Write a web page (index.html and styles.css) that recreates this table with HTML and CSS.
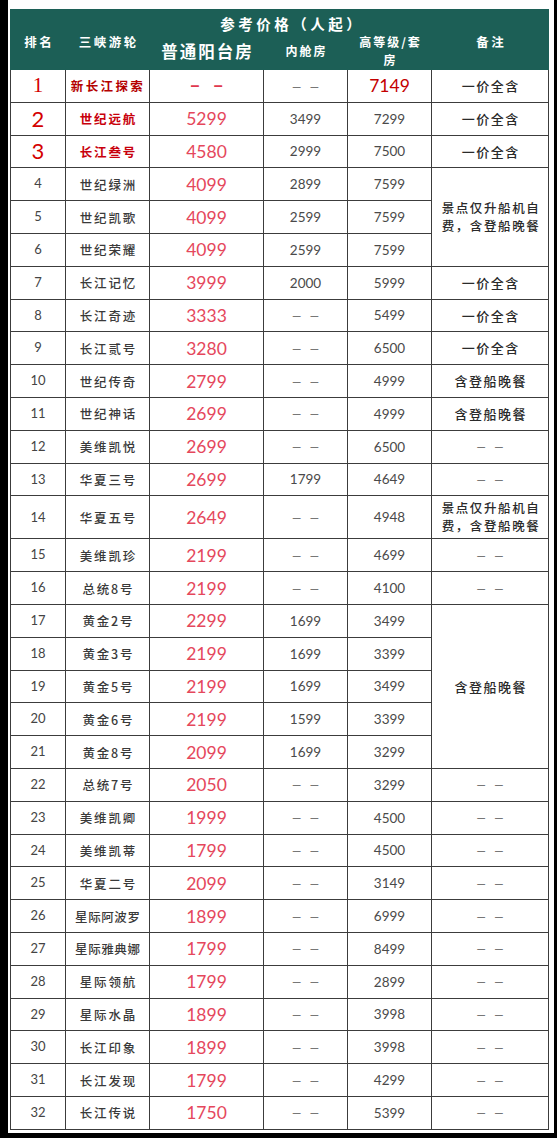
FILE: index.html
```html
<!DOCTYPE html>
<html lang="zh">
<head>
<meta charset="utf-8">
<title>三峡游轮参考价格</title>
<link rel="stylesheet" href="styles.css">
</head>
<body>
<div class="panel">
<table class="price">
<colgroup>
<col class="c1"><col class="c2"><col class="c3"><col class="c4"><col class="c5"><col class="c6">
</colgroup>
<thead>
<tr class="ha">
<th rowspan="2" class="hs">排名</th>
<th rowspan="2" class="hs">三峡游轮</th>
<th colspan="3" class="htitle">参考价格（人起）</th>
<th rowspan="2" class="hs">备注</th>
</tr>
<tr class="hb">
<th class="hbig">普通阳台房</th>
<th class="hsm">内舱房</th>
<th class="hsm hwrap">高等级/套房</th>
</tr>
</thead>
<tbody>
<tr><td class="rk rk1">1</td><td class="nm nm1">新长江探索</td><td class="dash dred">– –</td><td class="dash">– –</td><td class="p5red">7149</td><td class="rm">一价全含</td></tr>
<tr><td class="rk rktop">2</td><td class="nm nmred">世纪远航</td><td class="p3">5299</td><td class="pn">3499</td><td class="pn">7299</td><td class="rm">一价全含</td></tr>
<tr><td class="rk rktop">3</td><td class="nm nmred">长江叁号</td><td class="p3">4580</td><td class="pn">2999</td><td class="pn">7500</td><td class="rm">一价全含</td></tr>
<tr><td class="rk">4</td><td class="nm">世纪绿洲</td><td class="p3">4099</td><td class="pn">2899</td><td class="pn">7599</td><td class="rm rmwrap" rowspan="3">景点仅升船机自费，含登船晚餐</td></tr>
<tr><td class="rk">5</td><td class="nm">世纪凯歌</td><td class="p3">4099</td><td class="pn">2599</td><td class="pn">7599</td></tr>
<tr><td class="rk">6</td><td class="nm">世纪荣耀</td><td class="p3">4099</td><td class="pn">2599</td><td class="pn">7599</td></tr>
<tr><td class="rk">7</td><td class="nm">长江记忆</td><td class="p3">3999</td><td class="pn">2000</td><td class="pn">5999</td><td class="rm">一价全含</td></tr>
<tr><td class="rk">8</td><td class="nm">长江奇迹</td><td class="p3">3333</td><td class="dash">– –</td><td class="pn">5499</td><td class="rm">一价全含</td></tr>
<tr><td class="rk">9</td><td class="nm">长江贰号</td><td class="p3">3280</td><td class="dash">– –</td><td class="pn">6500</td><td class="rm">一价全含</td></tr>
<tr><td class="rk">10</td><td class="nm">世纪传奇</td><td class="p3">2799</td><td class="dash">– –</td><td class="pn">4999</td><td class="rm">含登船晚餐</td></tr>
<tr><td class="rk">11</td><td class="nm">世纪神话</td><td class="p3">2699</td><td class="dash">– –</td><td class="pn">4999</td><td class="rm">含登船晚餐</td></tr>
<tr><td class="rk">12</td><td class="nm">美维凯悦</td><td class="p3">2699</td><td class="dash">– –</td><td class="pn">6500</td><td class="dash">– –</td></tr>
<tr><td class="rk">13</td><td class="nm">华夏三号</td><td class="p3">2699</td><td class="pn">1799</td><td class="pn">4649</td><td class="dash">– –</td></tr>
<tr class="tall"><td class="rk">14</td><td class="nm">华夏五号</td><td class="p3">2649</td><td class="dash">– –</td><td class="pn">4948</td><td class="rm rmwrap">景点仅升船机自费，含登船晚餐</td></tr>
<tr><td class="rk">15</td><td class="nm">美维凯珍</td><td class="p3">2199</td><td class="dash">– –</td><td class="pn">4699</td><td class="dash">– –</td></tr>
<tr><td class="rk">16</td><td class="nm">总统8号</td><td class="p3">2199</td><td class="dash">– –</td><td class="pn">4100</td><td class="dash">– –</td></tr>
<tr><td class="rk">17</td><td class="nm">黄金2号</td><td class="p3">2299</td><td class="pn">1699</td><td class="pn">3499</td><td class="rm" rowspan="5">含登船晚餐</td></tr>
<tr><td class="rk">18</td><td class="nm">黄金3号</td><td class="p3">2199</td><td class="pn">1699</td><td class="pn">3399</td></tr>
<tr><td class="rk">19</td><td class="nm">黄金5号</td><td class="p3">2199</td><td class="pn">1699</td><td class="pn">3499</td></tr>
<tr><td class="rk">20</td><td class="nm">黄金6号</td><td class="p3">2199</td><td class="pn">1599</td><td class="pn">3399</td></tr>
<tr><td class="rk">21</td><td class="nm">黄金8号</td><td class="p3">2099</td><td class="pn">1699</td><td class="pn">3299</td></tr>
<tr><td class="rk">22</td><td class="nm">总统7号</td><td class="p3">2050</td><td class="dash">– –</td><td class="pn">3299</td><td class="dash">– –</td></tr>
<tr><td class="rk">23</td><td class="nm">美维凯卿</td><td class="p3">1999</td><td class="dash">– –</td><td class="pn">4500</td><td class="dash">– –</td></tr>
<tr><td class="rk">24</td><td class="nm">美维凯蒂</td><td class="p3">1799</td><td class="dash">– –</td><td class="pn">4500</td><td class="dash">– –</td></tr>
<tr><td class="rk">25</td><td class="nm">华夏二号</td><td class="p3">2099</td><td class="dash">– –</td><td class="pn">3149</td><td class="dash">– –</td></tr>
<tr><td class="rk">26</td><td class="nm nm5">星际阿波罗</td><td class="p3">1899</td><td class="dash">– –</td><td class="pn">6999</td><td class="dash">– –</td></tr>
<tr><td class="rk">27</td><td class="nm nm5">星际雅典娜</td><td class="p3">1799</td><td class="dash">– –</td><td class="pn">8499</td><td class="dash">– –</td></tr>
<tr><td class="rk">28</td><td class="nm">星际领航</td><td class="p3">1799</td><td class="dash">– –</td><td class="pn">2899</td><td class="dash">– –</td></tr>
<tr><td class="rk">29</td><td class="nm">星际水晶</td><td class="p3">1899</td><td class="dash">– –</td><td class="pn">3998</td><td class="dash">– –</td></tr>
<tr><td class="rk">30</td><td class="nm">长江印象</td><td class="p3">1899</td><td class="dash">– –</td><td class="pn">3998</td><td class="dash">– –</td></tr>
<tr><td class="rk">31</td><td class="nm">长江发现</td><td class="p3">1799</td><td class="dash">– –</td><td class="pn">4299</td><td class="dash">– –</td></tr>
<tr><td class="rk">32</td><td class="nm">长江传说</td><td class="p3">1750</td><td class="dash">– –</td><td class="pn">5399</td><td class="dash">– –</td></tr>
</tbody>
</table>
</div>
</body>
</html>
```
FILE: styles.css
```css
html, body {
  margin: 0;
  padding: 0;
  background: #000;
}
body {
  width: 557px;
  height: 1138px;
  overflow: hidden;
}
.panel {
  margin-left: 8px;
  width: 546px;
  height: 1133px;
  background: #fff;
  padding: 9px 0 0 2px;
  box-sizing: border-box;
}
.price {
  width: 538px;
  table-layout: fixed;
  border-collapse: collapse;
  font-family: "Noto Sans CJK SC", "Noto Sans", sans-serif;
  color: #3a3a3a;
}
.c1 { width: 55px; }
.c2 { width: 84px; }
.c3 { width: 114px; }
.c4 { width: 84px; }
.c5 { width: 84px; }
.c6 { width: 117px; }

thead th {
  background: #1c5f56;
  color: #fff;
  border: 1px solid #1c5f56;
  font-weight: 700;
  padding: 0;
  text-align: center;
  line-height: 1.2;
}
.ha { height: 23px; }
.hb { height: 37px; }
.hs {
  font-size: 12.5px;
  letter-spacing: 2.5px;
  padding-left: 2.5px;
  padding-top: 3px;
}
.htitle {
  font-size: 14.5px;
  letter-spacing: 3.5px;
  padding-left: 3.5px;
  vertical-align: bottom;
}
.hbig {
  font-size: 16.5px;
  letter-spacing: 2px;
  padding-left: 2px;
  padding-top: 2px;
}
.hsm {
  font-size: 12px;
  letter-spacing: 2px;
  padding-left: 2px;
}
.hwrap {
  line-height: 18px;
  padding: 0 8px 0 10px;
  word-break: break-all;
}

tbody tr { height: 32.8px; }
tbody tr.tall { height: 43px; }
tbody td {
  border: 1px solid #3c3c3c;
  padding: 0;
  text-align: center;
  vertical-align: middle;
  line-height: 1.2;
}

.rk {
  font-family: Lato, "Liberation Sans", sans-serif;
  font-size: 13px;
  color: #444;
}
.rk1 {
  font-family: "Liberation Serif", serif;
  font-size: 21px;
  color: #d40000;
}
.rktop {
  font-size: 22px;
  color: #d40000;
}
.nm {
  font-size: 12.5px;
  font-weight: 500;
  letter-spacing: 1.8px;
  padding-left: 1.8px;
  color: #3a3a3a;
}
.nm5 {
  letter-spacing: 0.6px;
  padding-left: 0.6px;
}
.nm1 {
  color: #b40000;
  font-weight: 700;
  font-size: 12.5px;
  letter-spacing: 2.4px;
  padding-left: 1px;
}
.nmred {
  color: #c8000c;
  font-weight: 700;
}
.p3 {
  font-family: Lato, "Liberation Sans", sans-serif;
  font-size: 17.5px;
  color: #e5475c;
}
.pn {
  font-family: "Liberation Sans Narrow", Lato, "Liberation Sans", sans-serif;
  font-size: 13.5px;
  color: #4a4a4a;
}
.p5red {
  font-family: Lato, "Liberation Sans", sans-serif;
  font-size: 17.5px;
  color: #c40000;
}
.dash {
  font-family: "Liberation Sans", sans-serif;
  font-size: 14px;
  color: #777;
  letter-spacing: 3px;
  padding-left: 3px;
}
.dred {
  color: #e0384e;
  font-size: 16px;
  font-weight: 700;
  letter-spacing: 5px;
  padding-left: 5px;
}
.rm {
  font-size: 13px;
  font-weight: 500;
  color: #2a2a2a;
  letter-spacing: 1.5px;
  padding-left: 1.5px;
}
.rmwrap {
  font-size: 12.5px;
  letter-spacing: 1.6px;
  line-height: 18px;
  padding: 0 4px 0 6px;
}
```
